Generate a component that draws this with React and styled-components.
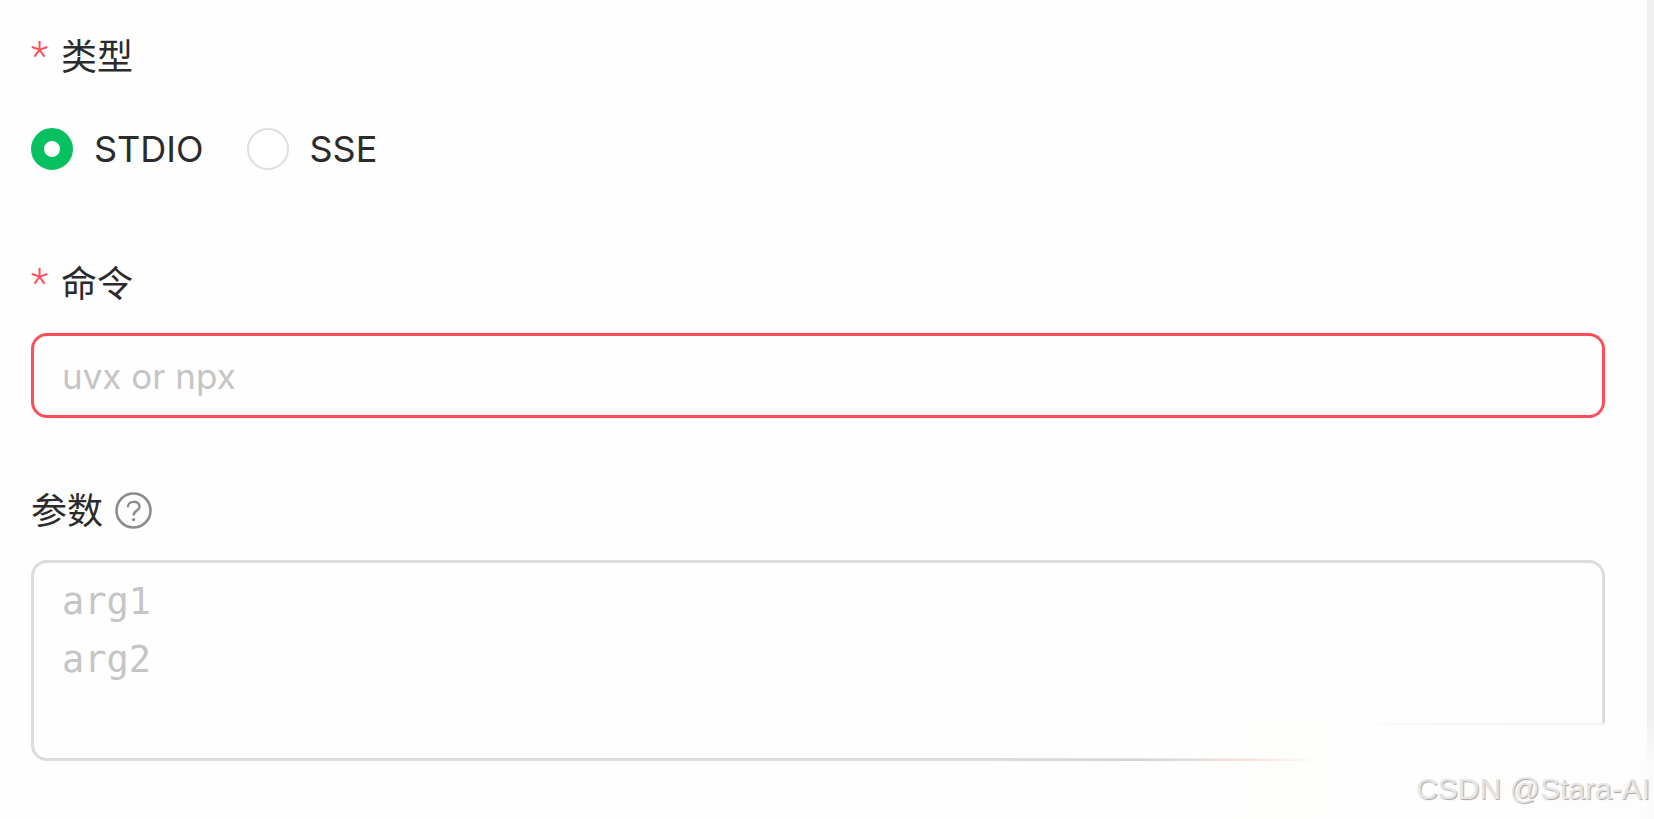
import React from "react";
import styled, { createGlobalStyle, css } from "styled-components";

const GlobalStyle = createGlobalStyle`
  *, *::before, *::after { box-sizing: border-box; }
  body {
    margin: 0;
    background: #fefefe;
    color: #2b2b2b;
    font-family: Inter, "Noto Sans CJK SC", sans-serif;
    font-size: 36px;
    line-height: 58px;
  }
`;

const Page = styled.main`
  position: relative;
  min-height: 100vh;
  padding: 28px 42px 58px 31px;
  border-right: 7px solid #f0f0f0;
`;

const Form = styled.form`
  display: flex;
  flex-direction: column;
  gap: 64px;
`;

const Field = styled.div`
  display: flex;
  flex-direction: column;
  gap: 20px;
`;

const LabelRow = styled.div`
  display: flex;
  align-items: center;
  gap: 12px;
  height: 58px;
`;

const Label = styled.label`
  display: flex;
  align-items: center;
`;

const Required = styled.span`
  width: 30px;
  color: #ff4d5b;
  font-family: Roboto, sans-serif;
  font-size: 40px;
  font-weight: 300;
`;

const HelpButton = styled.button`
  display: flex;
  padding: 0;
  border: 0;
  background: none;
  color: #8c8c8c;
`;

const RadioGroup = styled.div`
  display: flex;
  align-items: center;
  gap: 43px;
  height: 85px;
`;

const RadioLabel = styled.label`
  display: flex;
  align-items: center;
  gap: 21px;
`;

const Radio = styled.input`
  appearance: none;
  width: 42px;
  height: 42px;
  margin: 0;
  border: 2px solid #dedede;
  border-radius: 50%;
  background: #fff;

  &:checked {
    border: 13px solid #07c160;
  }
`;

const control = css`
  display: block;
  width: 100%;
  margin: 0;
  border-radius: 16px;
  outline: 0;
  background: #fefefe;
  color: #2b2b2b;
  &::placeholder { color: #c5c5c5; opacity: 1; }
`;

const TextInput = styled.input`
  ${control}
  height: 85px;
  padding: 0 28px;
  border: 3px solid #ff4d5b;
  font: 35px/58px Inter, sans-serif;
`;

const TextArea = styled.textarea`
  ${control}
  height: 201px;
  padding: 10px 28px;
  border: 3px solid #dcdcdc;
  font: 37px/58px "DejaVu Sans Mono", monospace;
  resize: none;
`;

const Wash = styled.svg`
  position: absolute;
  right: -7px;
  bottom: 0;
  width: 700px;
  height: 119px;
  pointer-events: none;
`;

const Watermark = styled.div`
  position: absolute;
  right: -3px;
  bottom: 12px;
  color: #e6e6e6;
  font: 30px/36px "Liberation Sans", Arial, sans-serif;
  text-shadow: 1px 1px 1px #a6a6a6;
  white-space: nowrap;
  pointer-events: none;
`;

function HelpIcon() {
  return (
    <svg width="38" height="38" viewBox="0 0 38 38" fill="none" stroke="currentColor" aria-hidden="true">
      <circle cx="18.5" cy="18.5" r="17" strokeWidth="2.6" />
      <path d="M12.8 15.2C12.8 8.1 24.6 8.1 24.6 14.8C24.6 18.6 18.6 18.4 18.6 23.4" strokeWidth="2.4" />
      <circle cx="18.6" cy="27.6" r="1.7" fill="currentColor" stroke="none" />
    </svg>
  );
}

function CornerWash() {
  return (
    <Wash viewBox="0 0 700 119" aria-hidden="true">
      <defs>
        <linearGradient id="fade" x1="0" x2="1">
          <stop offset="0" stopColor="#fefefd" stopOpacity="0" />
          <stop offset="0.25" stopColor="#fefefd" stopOpacity="0.2" />
          <stop offset="0.52" stopColor="#fefefd" stopOpacity="1" />
          <stop offset="1" stopColor="#fefdfd" stopOpacity="1" />
        </linearGradient>
        <linearGradient id="edge" x1="0" x2="1">
          <stop offset="0" stopColor="#f8f3f2" stopOpacity="0" />
          <stop offset="0.4" stopColor="#f8f3f2" />
          <stop offset="1" stopColor="#f4f2f2" />
        </linearGradient>
        <linearGradient id="tint" x1="0" x2="1">
          <stop offset="0" stopColor="#c4cdc8" stopOpacity="0" />
          <stop offset="0.5" stopColor="#c4cdc8" stopOpacity="0.6" />
          <stop offset="0.8" stopColor="#ffd8d0" stopOpacity="0.7" />
          <stop offset="1" stopColor="#ffe7e2" stopOpacity="0" />
        </linearGradient>
        <linearGradient id="barFade" x1="0" y1="0" x2="0" y2="1">
          <stop offset="0" stopColor="#fcfbfb" stopOpacity="0" />
          <stop offset="0.4" stopColor="#fcfbfb" stopOpacity="0.9" />
          <stop offset="1" stopColor="#fcfbfb" />
        </linearGradient>
      </defs>
      <path d="M0 52C60 38 200 36 270 22C340 10 430 20 500 24H651V22H680L693 28V119H80Q0 100 0 52Z" fill="url(#fade)" />
      <rect x="693" y="20" width="7" height="99" fill="url(#barFade)" />
      <rect x="0" y="59" width="370" height="2" fill="url(#tint)" />
      <rect x="400" y="23" width="251" height="2" fill="url(#edge)" />
    </Wash>
  );
}

export default function App() {
  return (
    <>
      <GlobalStyle />
      <Page>
        <Form>
          <Field role="radiogroup" aria-labelledby="type-label">
            <LabelRow>
              <Label as="span" id="type-label"><Required>*</Required>类型</Label>
            </LabelRow>
            <RadioGroup>
              <RadioLabel><Radio type="radio" name="type" value="stdio" defaultChecked />STDIO</RadioLabel>
              <RadioLabel><Radio type="radio" name="type" value="sse" />SSE</RadioLabel>
            </RadioGroup>
          </Field>
          <Field>
            <LabelRow>
              <Label htmlFor="command"><Required>*</Required>命令</Label>
            </LabelRow>
            <TextInput id="command" type="text" placeholder="uvx or npx" required aria-invalid="true" />
          </Field>
          <Field>
            <LabelRow>
              <Label htmlFor="args">参数</Label>
              <HelpButton type="button" aria-label="参数"><HelpIcon /></HelpButton>
            </LabelRow>
            <TextArea id="args" placeholder={"arg1\narg2"} />
          </Field>
        </Form>
        <CornerWash />
        <Watermark>CSDN @Stara-AI</Watermark>
      </Page>
    </>
  );
}
